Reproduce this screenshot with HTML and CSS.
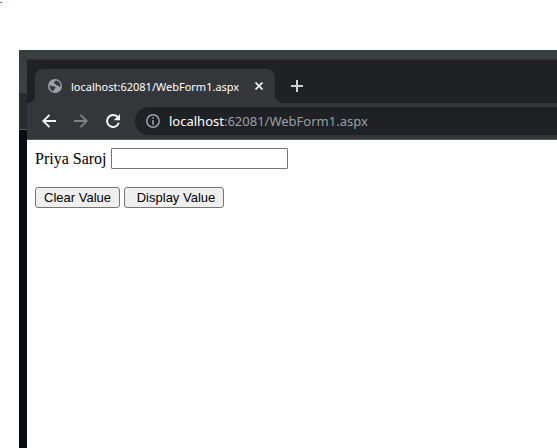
FILE: index.html
```html
<!DOCTYPE html>
<html lang="en">
<head>
<meta charset="utf-8">
<title>WebForm1</title>
<link rel="stylesheet" href="styles.css">
</head>
<body>
<p class="lead">.</p>
<div class="desktop">
  <div class="browser">
    <div class="tabs">
      <div class="tab">
        <svg class="globe" width="14" height="14" viewBox="0 0 14 14" aria-hidden="true">
          <circle cx="7" cy="7" r="7" fill="#9aa0a6"/>
          <path d="M1.500 6.300 L4.400 7.200 Q5.600 7.700 6.600 7.600 L7.600 8.500 L6.900 9.700 L5.800 10.200 L5.600 12.400 Q1.500 11.200 1.500 6.300Z M7.800 1.600 L6.200 3.100 L6.300 4.500 L7.600 5 L8.200 6.300 L10.300 6.500 L11.300 7.700 L12.500 7.500 Q12.800 3.200 9 1.800Z" fill="#35363a"/>
        </svg>
        <span class="title">localhost:62081/WebForm1.aspx</span>
        <button class="icon" aria-label="Close tab"><svg width="8" height="8" viewBox="0 0 8 8"><path d="M.5 .5l7 7M7.500 .5l-7 7" stroke="#f1f3f4" stroke-width="1.700"/></svg></button>
      </div>
      <button class="icon add" aria-label="New tab"><svg width="12" height="12" viewBox="0 0 12 12"><path d="M6 0v12M0 6h12" stroke="#cfd1d4" stroke-width="2"/></svg></button>
    </div>
    <div class="toolbar">
      <button class="icon" aria-label="Back"><svg width="14" height="14" viewBox="0 0 14 14"><path d="M14 7H1.500M7.500 .8L1.300 7l6.200 6.200" fill="none" stroke="#f1f3f4" stroke-width="1.900"/></svg></button>
      <button class="icon" aria-label="Forward"><svg width="14" height="14" viewBox="0 0 14 14"><path d="M0 7h12.500M6.500 .8L12.700 7l-6.200 6.200" fill="none" stroke="#7f8185" stroke-width="1.900"/></svg></button>
      <button class="icon" aria-label="Reload"><svg width="14" height="14" viewBox="0 0 14 14"><path d="M12 3.600A6 6 0 1 0 12.800 8.800" fill="none" stroke="#f1f3f4" stroke-width="2"/><path d="M14 0v6.300H7.700z" fill="#f1f3f4"/></svg></button>
      <div class="address">
        <svg width="14" height="14" viewBox="0 0 14 14" aria-hidden="true"><circle cx="7" cy="7" r="6.200" fill="none" stroke="#9aa0a6" stroke-width="1.500"/><path d="M7 3.200v1.600M7 6v4.800" stroke="#9aa0a6" stroke-width="1.600"/></svg>
        <span><b>localhost</b>:62081/WebForm1.aspx</span>
      </div>
    </div>
    <form class="page">
      <div class="field"><label for="name">Priya Saroj</label> <input id="name" type="text"></div>
      <div class="actions">
        <button type="button">Clear Value</button>
        <button type="button" class="display">Display Value</button>
      </div>
    </form>
  </div>
</div>
</body>
</html>
```
FILE: styles.css
```css
* { box-sizing: border-box; }

body {
  margin: 0;
  min-height: 100vh;
  display: flex;
  flex-direction: column;
  overflow: hidden;
  background: #fff;
}

.lead {
  height: 50px;
  margin: 0;
  font: bold 8px/2px "Liberation Sans", Arial, sans-serif;
  color: #000;
}

.desktop {
  flex: 1;
  display: flex;
  margin-left: 19px;
  padding: 10px 0 0 8px;
  background:
    linear-gradient(#363b3e, #3b4144 8px, #33322f 9px, #33322f 10px) 8px 0 / 100% 10px no-repeat,
    linear-gradient(#363b3e, #3b4145 43px, #2a2b2f 43px, #2a2b2f 79px, #57595c 79px, #57595c 80px, #070c12 80px);
}

.browser {
  flex: 1;
  display: flex;
  flex-direction: column;
  min-width: 0;
  font-family: "Noto Sans", "Segoe UI", sans-serif;
}

.tabs {
  display: flex;
  height: 43px;
  padding: 9px 8px 0;
  background: #202124;
}

.tab {
  position: relative;
  display: flex;
  align-items: center;
  width: 240px;
  padding: 0 12px;
  border-radius: 8px 8px 0 0;
  background: #35363a;
  color: #fff;
  font-size: 11px;
}

.tab::before,
.tab::after {
  content: "";
  position: absolute;
  bottom: 0;
  width: 8px;
  height: 8px;
}

.tab::before {
  right: 100%;
  background: radial-gradient(circle at 0 0, transparent 8px, #35363a 8px);
}

.tab::after {
  left: 100%;
  background: radial-gradient(circle at 100% 0, transparent 8px, #35363a 8px);
}

.globe { margin: 0 9px 0 1px; }

.title {
  flex: 1;
  white-space: nowrap;
}

.icon {
  display: flex;
  padding: 0;
  border: 0;
  background: none;
}

.add {
  align-self: center;
  margin-left: 16px;
}

.toolbar {
  display: flex;
  align-items: center;
  gap: 18px;
  height: 37px;
  padding: 0 0 1px 15px;
  border-bottom: 1px solid #5a5b5e;
  background: #35363a;
}

.address {
  flex: 1;
  display: flex;
  align-items: center;
  gap: 9px;
  height: 28px;
  margin-left: -3px;
  padding-left: 11px;
  border-radius: 14px 0 0 14px;
  background: #202124;
  color: #9aa0a6;
  font-size: 13px;
  white-space: nowrap;
}

.address b {
  font-weight: 400;
  color: #fff;
}

.page {
  flex: 1;
  padding: 8px;
  background: #fff;
  color: #000;
  font: 16px/21px "Liberation Serif", "Times New Roman", serif;
}

.field {
  display: flex;
  gap: 4px;
}

.field input {
  width: 177px;
  height: 21px;
  border: 1px solid #767676;
  border-radius: 1px;
}

.actions {
  display: flex;
  gap: 4px;
  margin-top: 18px;
}

.actions button {
  width: 85px;
  height: 21px;
  padding: 0;
  border: 1px solid #767676;
  border-radius: 3px;
  background: #efefef;
  color: #000;
  font: 13px/19px "Liberation Sans", Arial, sans-serif;
  white-space: nowrap;
}

.actions .display {
  width: 100px;
  padding-left: 4px;
}
```
